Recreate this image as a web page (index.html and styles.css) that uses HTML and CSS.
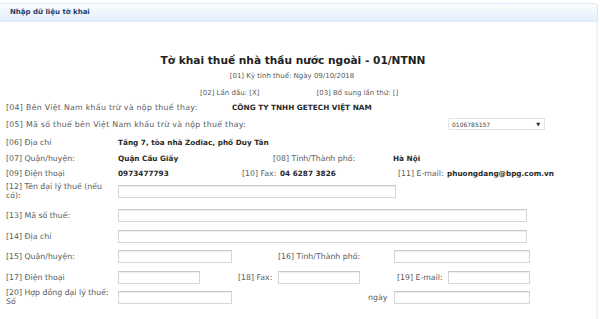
FILE: index.html
```html
<!DOCTYPE html>
<html lang="vi">
<head>
    <meta charset="UTF-8">
    <title>Nhập dữ liệu tờ khai</title>
    <link rel="stylesheet" href="styles.css">
</head>
<body>
    <div class="panel">
        <div class="panel-head">Nhập dữ liệu tờ khai</div>
        <div class="panel-body">
            <h1 class="form-title">Tờ khai thuế nhà thầu nước ngoài - 01/NTNN</h1>
            <div class="meta">[01] Kỳ tính thuế: Ngày 09/10/2018</div>
            <div class="meta meta-pair"><span>[02] Lần đầu: [X]</span><span>[03] Bổ sung lần thứ: []</span></div>

            <div class="row r04">
                <span class="lbl lbl-long">[04] Bên Việt Nam khấu trừ và nộp thuế thay:</span>
                <span class="val">CÔNG TY TNHH GETECH VIỆT NAM</span>
            </div>
            <div class="row r05">
                <span class="lbl lbl-xlong">[05] Mã số thuế bên Việt Nam khấu trừ và nộp thuế thay:</span>
                <div class="select"><span>0106785157</span><span class="caret">▼</span></div>
            </div>
            <div class="row r06">
                <span class="lbl">[06] Địa chỉ</span>
                <span class="val">Tầng 7, tòa nhà Zodiac, phố Duy Tân</span>
            </div>
            <div class="row r07">
                <span class="lbl">[07] Quận/huyện:</span>
                <span class="val c07">Quận Cầu Giấy</span>
                <span class="lbl c08">[08] Tỉnh/Thành phố:</span>
                <span class="val">Hà Nội</span>
            </div>
            <div class="row r09">
                <span class="lbl">[09] Điện thoại</span>
                <span class="val c09">0973477793</span>
                <span class="lbl c10">[10] Fax:</span>
                <span class="val c10v">04 6287 3826</span>
                <span class="lbl c11">[11] E-mail:</span>
                <span class="val">phuongdang@bpg.com.vn</span>
            </div>
            <div class="row r12">
                <span class="lbl lbl-wrap">[12] Tên đại lý thuế (nếu có):</span>
                <input class="inp in-12" type="text">
            </div>
            <div class="row r13">
                <span class="lbl">[13] Mã số thuế:</span>
                <input class="inp in-wide" type="text">
            </div>
            <div class="row r14">
                <span class="lbl">[14] Địa chỉ</span>
                <input class="inp in-wide" type="text">
            </div>
            <div class="row r15">
                <span class="lbl">[15] Quận/huyện:</span>
                <input class="inp in-mid" type="text">
                <span class="lbl c16">[16] Tỉnh/Thành phố:</span>
                <input class="inp in-right" type="text">
            </div>
            <div class="row r17">
                <span class="lbl">[17] Điện thoại</span>
                <input class="inp in-small" type="text">
                <span class="lbl c18">[18] Fax:</span>
                <input class="inp in-small" type="text">
                <span class="lbl c19">[19] E-mail:</span>
                <input class="inp in-small" type="text">
            </div>
            <div class="row r20">
                <span class="lbl lbl-wrap">[20] Hợp đồng đại lý thuế: Số</span>
                <input class="inp in-mid" type="text">
                <span class="lbl c-ngay">ngày</span>
                <input class="inp in-right" type="text">
            </div>
        </div>
    </div>
</body>
</html>
```

FILE: styles.css
```css
body {
    margin: 0;
    overflow: hidden;
    background: #fff;
    font-family: "DejaVu Sans", Verdana, sans-serif;
    font-size: 7px;
    color: #5a5a5a;
}
.panel {
    width: 598px;
    padding-top: 3px;
}
.panel-head {
    height: 17px;
    line-height: 17px;
    padding-left: 10px;
    font-weight: bold;
    color: #1f3c6c;
    background: linear-gradient(#fbfdff, #e2eefd);
    border: 1px solid #dde9fa;
    border-left: none;
    border-top-right-radius: 4px;
}
.panel-body {
    border-right: 2px solid #eaf3ff;
    height: 297px;
    padding-top: 31px;
    box-sizing: border-box;
}
.form-title {
    margin: 0;
    text-align: center;
    font-size: 10.6px;
    color: #222;
    line-height: 14px;
    padding-right: 10px;
}
.meta {
    text-align: center;
    line-height: 16px;
    margin-top: 1px;
    padding-right: 12px;
}
.meta-pair {
    display: flex;
    gap: 57px;
    padding-left: 200px;
}
.row {
    display: flex;
    align-items: center;
    height: 14px;
    padding-left: 6px;
}
.lbl {
    width: 112px;
    flex: none;
    font-size: 7.8px;
    white-space: nowrap;
}
.lbl-wrap {
    white-space: normal;
    line-height: 9px;
}
.lbl-long {
    width: 226px;
    letter-spacing: 0.3px;
}
.lbl-xlong {
    width: 442px;
    letter-spacing: 0.3px;
}
.val {
    font-weight: bold;
    font-size: 7.3px;
    color: #2a2a2a;
    white-space: nowrap;
}
.r04 { margin-top: -1px; }
.r05 { margin-top: 3px; }
.r06 { margin-top: 4px; }
.r07 { margin-top: 2px; }
.r09 { margin-top: 1px; }
.r12 { margin-top: 4px; }
.r13 { margin-top: 10px; }
.r14 { margin-top: 7px; }
.r15 { margin-top: 6px; }
.r17 { margin-top: 7px; }
.r20 { margin-top: 6px; }
.c07 { width: 155px; }
.c08 { width: 120px; }
.c09 { width: 124px; }
.c10 { width: 38px; }
.c10v { width: 118px; }
.c11 { width: 49px; }
.c16 { width: 116px; margin-left: 46px; }
.c18 { width: 40px; margin-left: 38px; }
.c19 { width: 51px; margin-left: 37px; }
.c-ngay { width: 26px; margin-left: 136px; }
.select {
    width: 97px;
    height: 12px;
    box-sizing: border-box;
    border: 1px solid #e4e4e4;
    display: flex;
    justify-content: space-between;
    align-items: center;
    padding: 0 4px 0 3px;
    font-size: 6px;
    color: #444;
}
.caret {
    font-size: 5px;
    color: #222;
}
.inp {
    margin: 0;
    padding: 0;
    height: 13px;
    box-sizing: border-box;
    border: 1px solid #d6d6d6;
    border-top-color: #c8c8c8;
    box-shadow: inset 0 1px 1px #eee;
    background: #fff;
    flex: none;
}
.in-12 { width: 278px; }
.in-wide { width: 409px; }
.in-mid { width: 114px; }
.in-right { width: 136px; }
.in-small { width: 82px; }
```
